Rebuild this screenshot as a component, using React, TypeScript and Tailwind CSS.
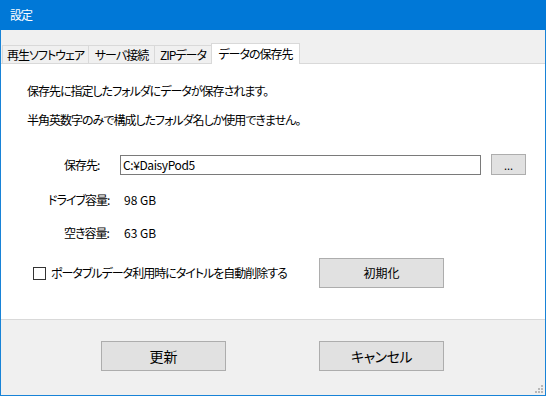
const font = {
  fontFamily: '"Noto Sans CJK JP", "Noto Sans", sans-serif',
};

function Tab({ label, width, active }: { label: string; width: number; active?: boolean }) {
  if (active) {
    return (
      <div
        className="h-[21px] -mb-px -ml-px bg-white border border-b-0 border-[#d9d9d9] flex items-center justify-center text-black relative z-10"
        style={{ width }}
      >
        {label}
      </div>
    );
  }
  return (
    <div
      className="h-[18px] bg-[#f0f0f0] border border-b-0 border-[#d9d9d9] flex items-center justify-center text-black -ml-px first:ml-0"
      style={{ width }}
    >
      {label}
    </div>
  );
}

function Button({ children, className }: { children: React.ReactNode; className?: string }) {
  return (
    <div
      className={`bg-[#e1e1e1] border border-[#adadad] flex items-center justify-center text-black ${className ?? ''}`}
    >
      {children}
    </div>
  );
}

function App() {
  return (
    <div
      className="w-[546px] h-[396px] flex flex-col bg-[#f0f0f0] text-[12px] leading-[16px] tracking-[-1px] [font-feature-settings:'palt'] overflow-hidden"
      style={font}
    >
      {/* title bar */}
      <div className="h-[30px] bg-[#0078d7] text-white flex items-center pl-[10px] shrink-0">設定</div>

      <div className="flex-1 flex flex-col border-x border-b border-[#1883d7]">
        {/* tabs */}
        <div className="flex items-end pt-[13px] pl-[1px]">
          <Tab label="再生ソフトウェア" width={87} />
          <Tab label="サーバ接続" width={67} />
          <Tab label="ZIPデータ" width={58} />
          <Tab label="データの保存先" width={89} active />
        </div>

        {/* panel */}
        <div className="h-[257px] bg-white border-t border-b border-[#d9d9d9] flex flex-col">
          <div className="pl-[26px] mt-[19px]">保存先に指定したフォルダにデータが保存されます。</div>
          <div className="pl-[26px] mt-[13px]">半角英数字のみで構成したフォルダ名しか使用できません。</div>

          <div className="flex items-center mt-[26px] pl-[63px]">
            <div className="w-[56px]">保存先:</div>
            <div className="w-[361px] h-[20px] border border-[#7a7a7a] flex items-center pl-[2px] tracking-[-0.4px]">
              C:¥DaisyPod5
            </div>
            <Button className="ml-[10px] w-[35px] h-[21px] text-[11px] tracking-normal">...</Button>
          </div>

          <div className="flex items-center mt-[17px] pl-[47px]">
            <div className="w-[76px]">ドライブ容量:</div>
            <div className="tracking-normal">98 GB</div>
          </div>

          <div className="flex items-center mt-[17px] pl-[63px]">
            <div className="w-[60px]">空き容量:</div>
            <div className="tracking-normal">63 GB</div>
          </div>

          <div className="flex items-center mt-[17px] pl-[32px]">
            <div className="w-[13px] h-[13px] border border-[#333333] bg-white" />
            <div className="ml-[5px] w-[268px]">ポータブルデータ利用時にタイトルを自動削除する</div>
            <Button className="w-[125px] h-[30px] tracking-normal">初期化</Button>
          </div>
        </div>

        {/* footer */}
        <div className="flex-1 relative">
          <div className="flex pt-[21px] pl-[100px]">
            <Button className="w-[125px] h-[30px] text-[14px] tracking-normal">更新</Button>
            <Button className="ml-[93px] w-[125px] h-[30px] text-[14px] tracking-[-0.5px]">キャンセル</Button>
          </div>
          <svg className="absolute right-[1px] bottom-[1px]" width="10" height="10" viewBox="0 0 10 10">
            <rect x="7" y="1" width="2" height="2" fill="#b8b8b8" />
            <rect x="4" y="4" width="2" height="2" fill="#b8b8b8" />
            <rect x="7" y="4" width="2" height="2" fill="#b8b8b8" />
            <rect x="1" y="7" width="2" height="2" fill="#b8b8b8" />
            <rect x="4" y="7" width="2" height="2" fill="#b8b8b8" />
            <rect x="7" y="7" width="2" height="2" fill="#b8b8b8" />
          </svg>
        </div>
      </div>
    </div>
  );
}

export default App;
